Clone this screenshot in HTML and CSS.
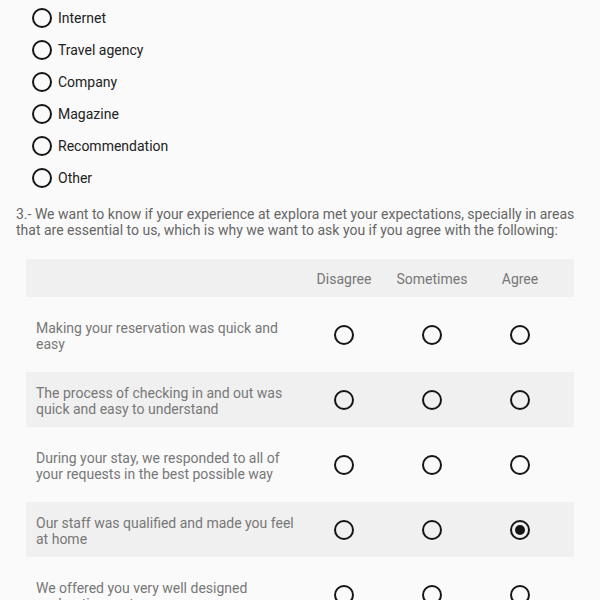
FILE: index.html
```html
<!DOCTYPE html>
<html>
<head>
<meta charset="utf-8">
<link rel="stylesheet" href="styles.css">
</head>
<body>
<div class="options">
  <label class="option"><span class="radio"></span><span>Internet</span></label>
  <label class="option"><span class="radio"></span><span>Travel agency</span></label>
  <label class="option"><span class="radio"></span><span>Company</span></label>
  <label class="option"><span class="radio"></span><span>Magazine</span></label>
  <label class="option"><span class="radio"></span><span>Recommendation</span></label>
  <label class="option"><span class="radio"></span><span>Other</span></label>
</div>
<p class="question">3.- We want to know if your experience at explora met your expectations, specially in areas that are essential to us, which is why we want to ask you if you agree with the following:</p>
<div class="matrix">
  <div class="row head">
    <div class="label"></div>
    <div class="col">Disagree</div>
    <div class="col">Sometimes</div>
    <div class="col">Agree</div>
  </div>
  <div class="row">
    <div class="label">Making your reservation was quick and easy</div>
    <div class="col"><span class="radio"></span></div>
    <div class="col"><span class="radio"></span></div>
    <div class="col"><span class="radio"></span></div>
  </div>
  <div class="row alt">
    <div class="label">The process of checking in and out was quick and easy to understand</div>
    <div class="col"><span class="radio"></span></div>
    <div class="col"><span class="radio"></span></div>
    <div class="col"><span class="radio"></span></div>
  </div>
  <div class="row">
    <div class="label">During your stay, we responded to all of your requests in the best possible way</div>
    <div class="col"><span class="radio"></span></div>
    <div class="col"><span class="radio"></span></div>
    <div class="col"><span class="radio"></span></div>
  </div>
  <div class="row alt">
    <div class="label">Our staff was qualified and made you feel at home</div>
    <div class="col"><span class="radio"></span></div>
    <div class="col"><span class="radio"></span></div>
    <div class="col"><span class="radio checked"></span></div>
  </div>
  <div class="row">
    <div class="label">We offered you very well designed exploration routes</div>
    <div class="col"><span class="radio"></span></div>
    <div class="col"><span class="radio"></span></div>
    <div class="col"><span class="radio"></span></div>
  </div>
</div>
</body>
</html>
```
FILE: styles.css
```css
html, body {
  margin: 0;
  padding: 0;
  background: #fafafa;
  font-family: Roboto, "Noto Sans", sans-serif;
  font-size: 14px;
}
.options {
  padding: 2px 0 0 32px;
  display: flex;
  flex-direction: column;
}
.option {
  height: 32px;
  display: flex;
  align-items: center;
  gap: 6px;
  color: #222;
  line-height: 16px;
}
.radio {
  display: inline-block;
  box-sizing: border-box;
  width: 20px;
  height: 20px;
  border: 2px solid #151515;
  border-radius: 50%;
  position: relative;
  flex: none;
}
.radio.checked::after {
  content: "";
  position: absolute;
  left: 3px;
  top: 3px;
  width: 10px;
  height: 10px;
  border-radius: 50%;
  background: #151515;
}
.question {
  margin: 12px 0 0 0;
  padding: 0 16px;
  line-height: 16px;
  color: #666;
}
.matrix {
  margin: 21px 26px 0 26px;
}
.row {
  display: grid;
  grid-template-columns: 274px 88px 88px 88px;
  padding-right: 10px;
  height: 55px;
  margin-top: 10px;
  align-items: center;
  color: #777;
  line-height: 16px;
}
.row.head {
  height: 38px;
  margin-top: 0;
  background: #f0f0f0;
}
.row.alt {
  background: #f0f0f0;
}
.label {
  padding: 2px 0 0 10px;
}
.head .col {
  padding-top: 2px;
}
.col {
  display: flex;
  justify-content: center;
  align-items: center;
}
```
